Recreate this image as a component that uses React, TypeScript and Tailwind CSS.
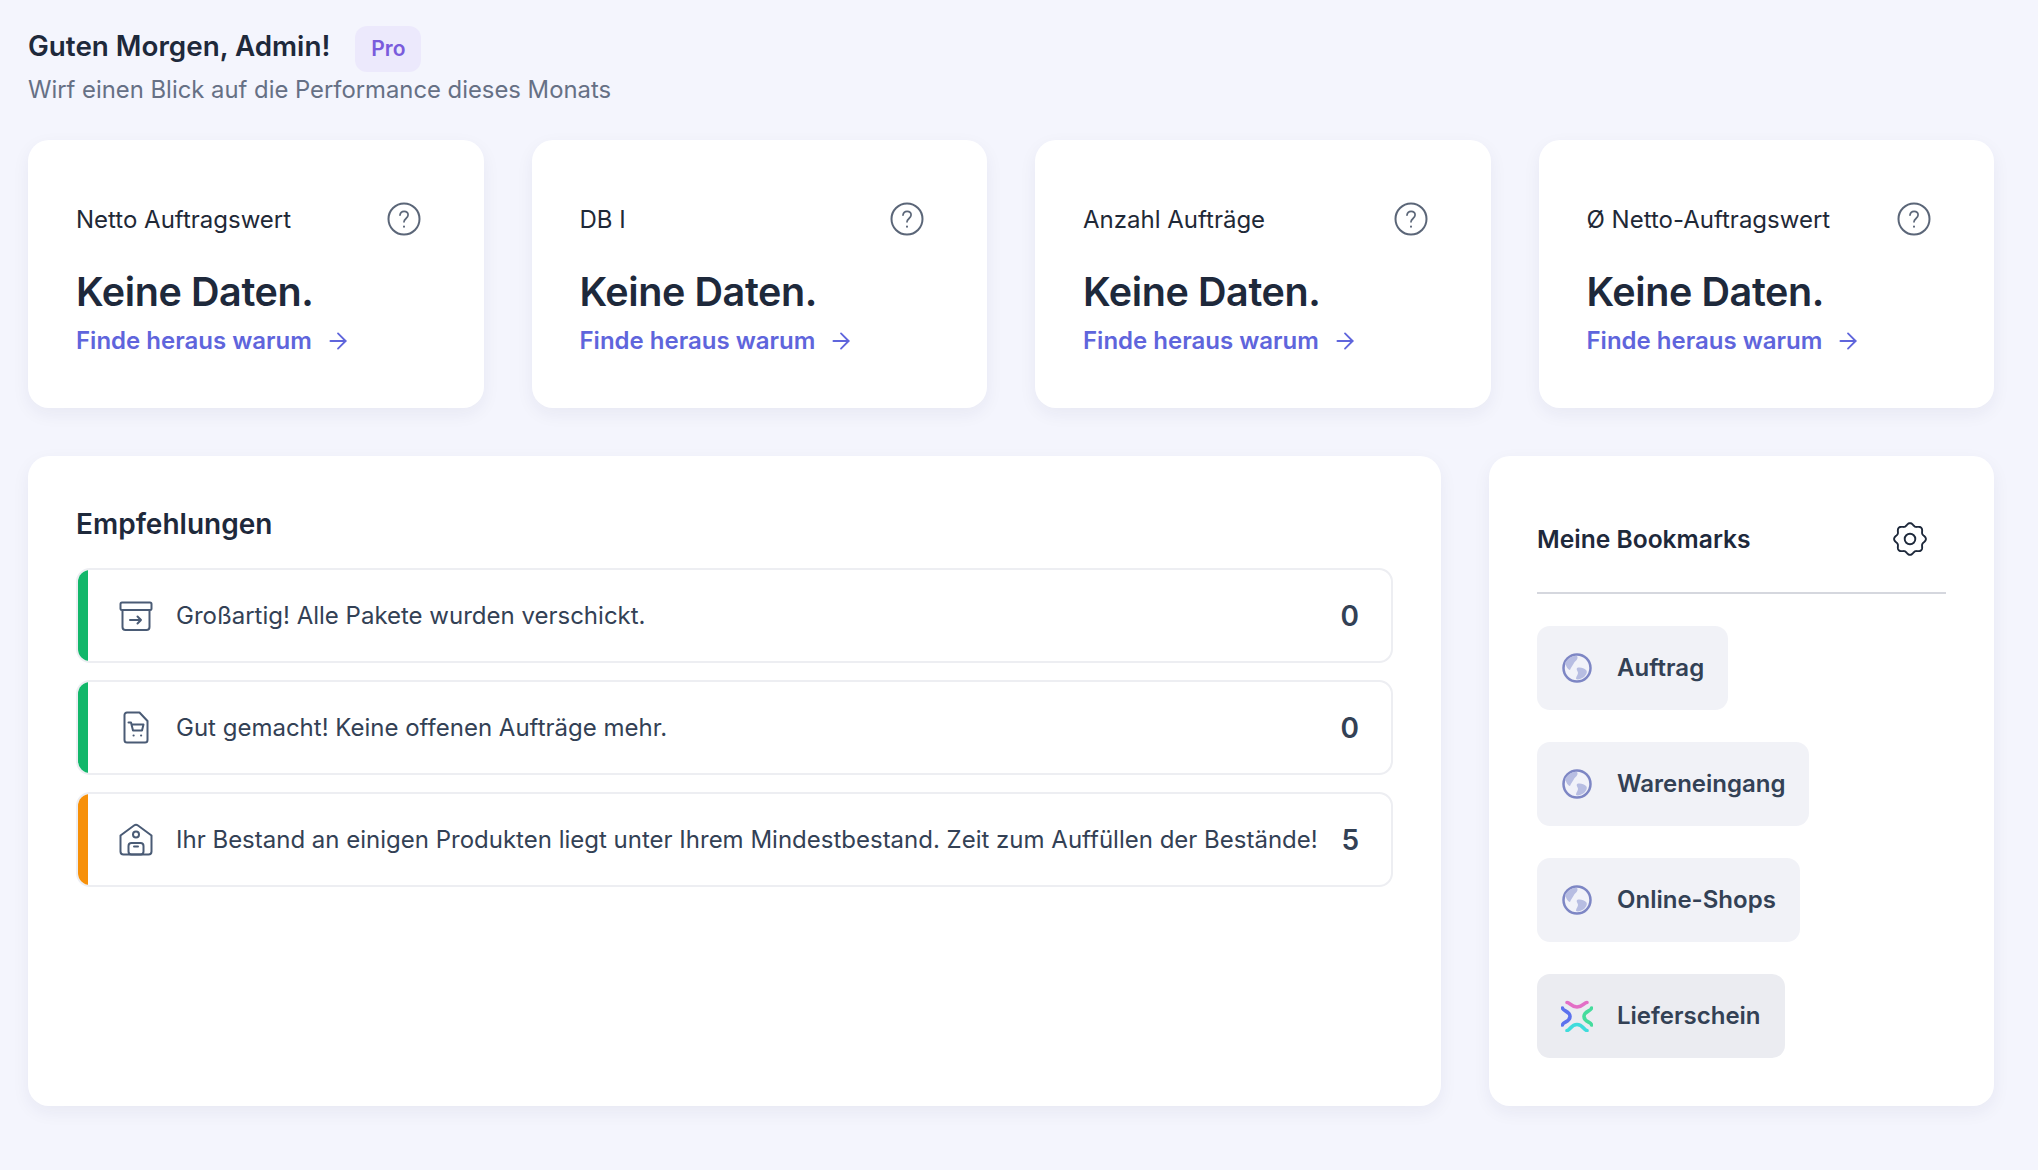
import { ArrowRight } from "lucide-react"

const font = { fontFamily: "Inter, sans-serif" }

// wavy gear outline, eight soft lobes
const gearPath = Array.from({ length: 120 }, (_, i) => {
  const a = (i / 120) * Math.PI * 2
  const r = 14.6 + 1.3 * Math.cos(8 * a)
  return `${i === 0 ? "M" : "L"}${(17 + r * Math.sin(a)).toFixed(2)} ${(17 - r * Math.cos(a)).toFixed(2)}`
}).join(" ") + " Z"

function HelpIcon() {
  return (
    <svg width="34" height="34" viewBox="0 0 34 34" fill="none" stroke="#5b6678" strokeWidth="2" strokeLinecap="round" strokeLinejoin="round">
      <circle cx="17" cy="17" r="15.500" />
      <path d="M13 13.200c.3-2.400 2-3.800 4.100-3.800 2.300 0 4 1.600 4 3.700 0 3.300-4.100 3.500-4.100 6.700" strokeWidth="1.700" />
      <path d="M17 24.600v.2" />
    </svg>
  )
}

function StatCard({ title }: { title: string }) {
  return (
    <div className="flex-1 h-[268px] bg-white rounded-[21px] shadow-[0_6px_18px_rgba(30,41,80,0.06)] px-12 pt-[59px]">
      <div className="flex items-center justify-between pr-[15px] h-[40px]">
        <span className="pt-[2px] text-[24px] text-[#1f2937]">{title}</span>
        <HelpIcon />
      </div>
      <div className="mt-[26px] text-[39.5px] leading-[54px] font-semibold tracking-[-0.4px] text-[#1e293b]">Keine Daten.</div>
      <a className="mt-[4px] flex items-center gap-[13px] text-[24px] leading-[36px] font-semibold text-[#5f65dc]">
        Finde heraus warum
        <ArrowRight size={26} strokeWidth={1.7} />
      </a>
    </div>
  )
}

function ArchiveIcon() {
  return (
    <svg width="34" height="30" viewBox="0 0 34 30" fill="none" stroke="#4a5b75" strokeWidth="2" strokeLinecap="round" strokeLinejoin="round">
      <rect x="1.500" y="1.500" width="31" height="7.500" rx="1.500" />
      <path d="M3.500 9v17a3 3 0 0 0 3 3h21a3 3 0 0 0 3-3V9" />
      <path d="M11 19h11M18.500 15.500 22 19l-3.500 3.500" />
    </svg>
  )
}

function CartFileIcon() {
  return (
    <svg width="26" height="33" viewBox="0 0 26 33" fill="none" stroke="#4a5b75" strokeWidth="2" strokeLinecap="round" strokeLinejoin="round">
      <path d="M4 1.500h12.500L24.500 10v19a2.500 2.500 0 0 1-2.500 2.500H4A2.500 2.500 0 0 1 1.500 29V4A2.500 2.500 0 0 1 4 1.500Z" />
      <path d="M5.500 11.500H8l2 8h9l1.500-6H9" />
      <path d="M10.500 24.500h.2M18 24.500h.2" />
    </svg>
  )
}

function HouseIcon() {
  return (
    <svg width="34" height="33" viewBox="0 0 34 33" fill="none" stroke="#4a5b75" strokeWidth="2" strokeLinecap="round" strokeLinejoin="round">
      <path d="M1.500 12.500 15 2.500a3.500 3.500 0 0 1 4 0l13.500 10v16a3 3 0 0 1-3 3h-25a3 3 0 0 1-3-3Z" />
      <circle cx="17" cy="11.500" r="3" />
      <rect x="9.500" y="20" width="15" height="11.500" rx="3" />
      <path d="M15 23.500h4" />
    </svg>
  )
}

function GearIcon() {
  return (
    <svg width="34" height="34" viewBox="0 0 34 34" fill="none" stroke="#1e293b" strokeWidth="1.900" strokeLinecap="round" strokeLinejoin="round">
      <path d={gearPath} />
      <circle cx="17" cy="17" r="5.300" />
    </svg>
  )
}

function GlobeIcon() {
  return (
    <svg width="30" height="30" viewBox="0 0 30 30" className="blur-[0.6px]">
      <circle cx="15" cy="15" r="13.500" fill="#f1f2f9" stroke="#7d86c4" strokeWidth="2.500" />
      <path d="M3 10c3-5 8-8 12-7 2 3-2 5-3 7s-3 4-4 7c-2 0-4-4-5-7Z" fill="#b7bde2" />
      <path d="M15 15c3-1 7 0 9 2 2 2 0 5-2 7-3 2-6 3-8 2 0-3 2-4 2-6s-2-3-1-5Z" fill="#b7bde2" />
    </svg>
  )
}

function AppLogo() {
  return (
    <svg width="32" height="32" viewBox="0 0 32 32" fill="none" strokeWidth="3.600" strokeLinecap="round" className="blur-[0.3px]">
      <path d="M6 2.500c3 0 4 4.500 10 4.500s7-4.500 10-4.500" stroke="#e36fc6" />
      <path d="M1.500 8c0 3 7.500 3 7.500 8.500S1.500 22 1.500 25" stroke="#5c72ee" />
      <path d="M30.500 8c0 3-7.500 3-7.500 8.500S30.500 22 30.500 25" stroke="#45dc9d" />
      <path d="M6 30.500c3 0 4-6 10-6s7 6 10 6" stroke="#3fdcdc" />
    </svg>
  )
}

function RecoRow({ color, icon, text, count }: { color: string; icon: React.ReactNode; text: string; count: number }) {
  return (
    <div className="h-[95px] flex rounded-[14px] border-2 border-[#edeef2] overflow-hidden">
      <div className={`w-[10px] shrink-0 ${color}`} />
      <div className="flex-1 flex items-center pl-[31px] pr-[32px]">
        <div className="w-[34px] flex justify-center shrink-0">{icon}</div>
        <span className="ml-[23px] text-[24px] text-[#334155] flex-1">{text}</span>
        <span className="text-[28px] font-semibold text-[#334155]">{count}</span>
      </div>
    </div>
  )
}

function Bookmark({ icon, label, dark }: { icon: React.ReactNode; label: string; dark?: boolean }) {
  return (
    <div className={`self-start h-[84px] flex items-center rounded-[13px] pl-[24px] pr-[24px] ${dark ? "bg-[#ebecf1]" : "bg-[#f1f2f7]"}`}>
      <div className="w-[32px] flex justify-center">{icon}</div>
      <span className="ml-[24px] pb-[1px] text-[24px] font-semibold text-[#334155]">{label}</span>
    </div>
  )
}

export default function App() {
  return (
    <div className="min-h-[1170px] bg-[#f4f5fd] pl-[28px] pr-[44px] pt-[26px]" style={font}>
      <div className="flex items-center h-[46px]">
        <h1 className="text-[27.800px] pb-[4px] font-semibold text-[#1e293b]">Guten Morgen, Admin!</h1>
        <span className="ml-[25px] w-[66px] h-[46px] flex items-center justify-center rounded-[12px] bg-[#ece9fc] text-[21px] font-semibold text-[#7a5bdc]">Pro</span>
      </div>
      <p className="text-[23.840px] leading-[36px] text-[#667085]">Wirf einen Blick auf die Performance dieses Monats</p>

      <div className="mt-[32px] flex gap-[48px]">
        <StatCard title="Netto Auftragswert" />
        <StatCard title="DB I" />
        <StatCard title="Anzahl Aufträge" />
        <StatCard title="Ø Netto-Auftragswert" />
      </div>

      <div className="mt-[48px] flex gap-[48px] h-[650px]">
        <div className="flex-1 bg-white rounded-[21px] shadow-[0_6px_18px_rgba(30,41,80,0.06)] px-12 pt-[48px]">
          <h2 className="text-[28px] leading-[40px] font-semibold text-[#1e293b]">Empfehlungen</h2>
          <div className="mt-[24px] flex flex-col gap-[17px]">
            <RecoRow color="bg-[#12b76a]" icon={<ArchiveIcon />} text="Großartig! Alle Pakete wurden verschickt." count={0} />
            <RecoRow color="bg-[#12b76a]" icon={<CartFileIcon />} text="Gut gemacht! Keine offenen Aufträge mehr." count={0} />
            <RecoRow color="bg-[#f79009]" icon={<HouseIcon />} text="Ihr Bestand an einigen Produkten liegt unter Ihrem Mindestbestand. Zeit zum Auffüllen der Bestände!" count={5} />
          </div>
        </div>

        <div className="w-[505px] shrink-0 bg-white rounded-[21px] shadow-[0_6px_18px_rgba(30,41,80,0.06)] px-12 pt-[63px]">
          <div className="flex items-center justify-between pr-[19px] h-[40px]">
            <h2 className="text-[24.600px] font-semibold text-[#1e293b]">Meine Bookmarks</h2>
            <GearIcon />
          </div>
          <div className="mt-[33px] border-t-2 border-[#d5d7de]" />
          <div className="mt-[32px] flex flex-col gap-[32px]">
            <Bookmark icon={<GlobeIcon />} label="Auftrag" />
            <Bookmark icon={<GlobeIcon />} label="Wareneingang" />
            <Bookmark icon={<GlobeIcon />} label="Online-Shops" />
            <Bookmark icon={<AppLogo />} label="Lieferschein" dark />
          </div>
        </div>
      </div>
    </div>
  )
}
